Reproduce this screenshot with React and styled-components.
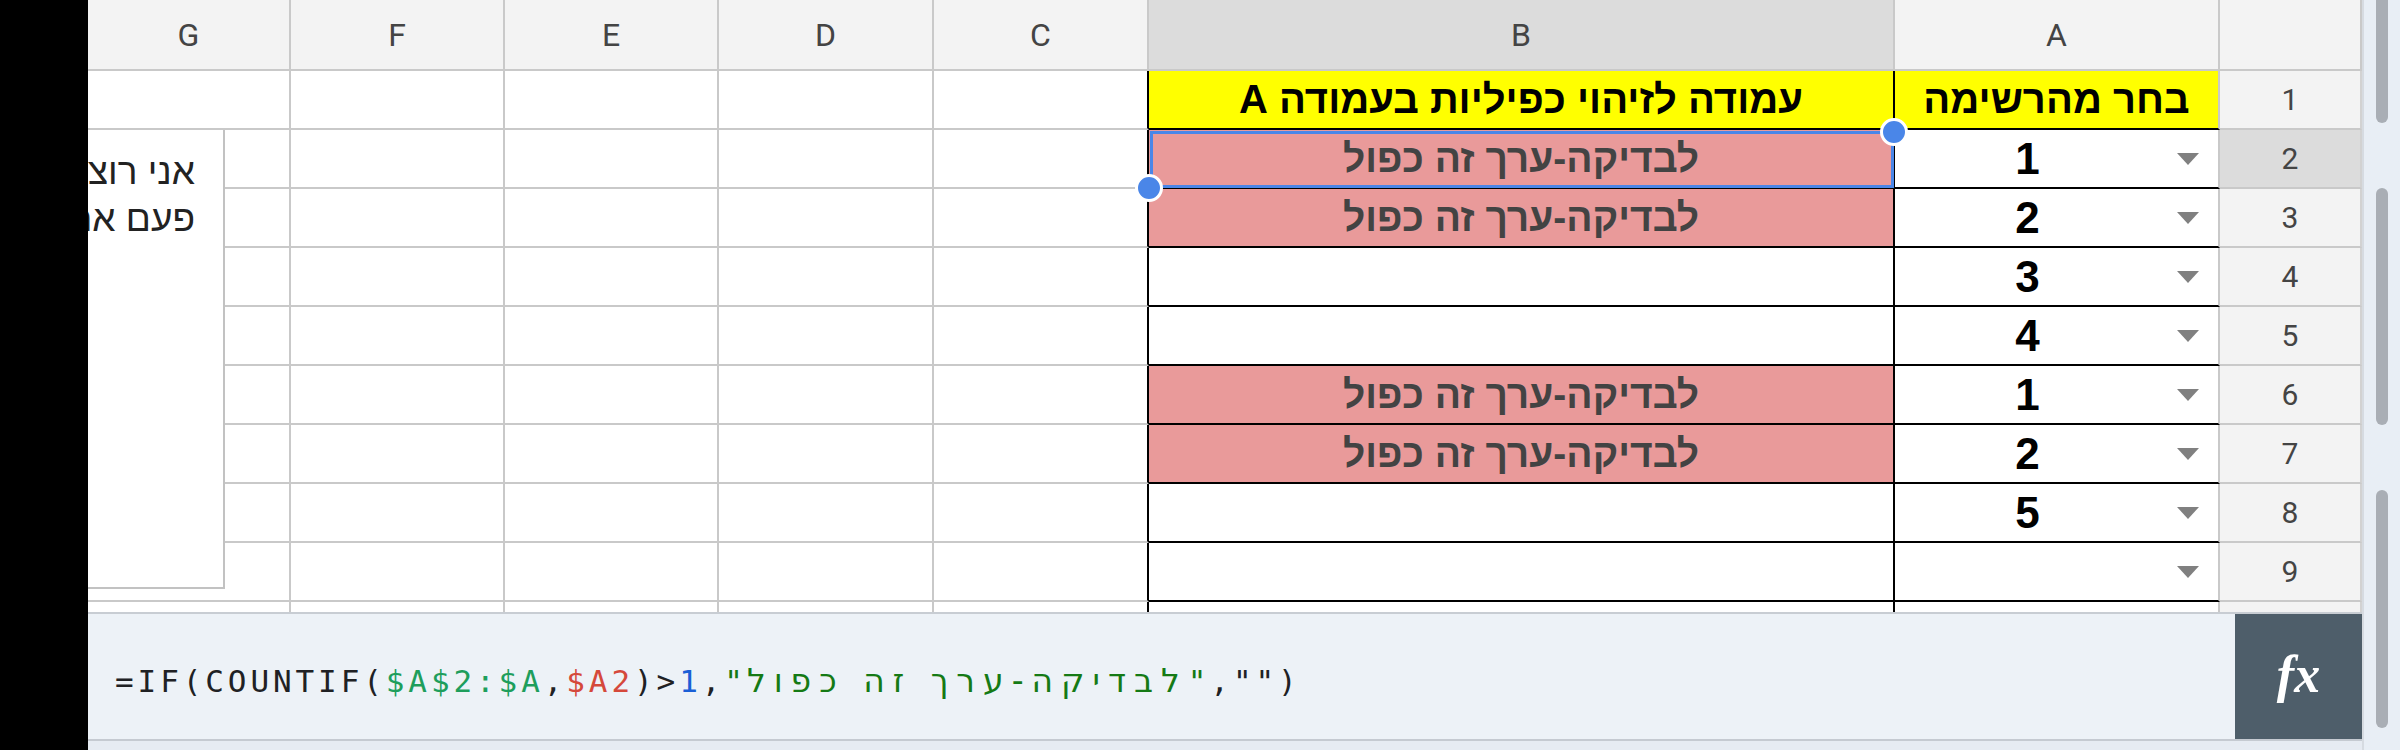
import React from 'react';
import styled, { createGlobalStyle } from 'styled-components';

const Global = createGlobalStyle`
  html, body { margin: 0; padding: 0; background: #000; }
  body { width: 2400px; height: 750px; overflow: hidden; }
  #root { width: 2400px; height: 750px; }
`;

const Screen = styled.div`
  display: flex;
  width: 2400px;
  height: 750px;
  background: #000;
`;

const Bezel = styled.div`
  width: 88px;
  flex: none;
  background: #000;
`;

const Main = styled.div`
  width: 2274px;
  flex: none;
  display: flex;
  flex-direction: column;
  background: #fff;
`;

const ScrollTrack = styled.div`
  width: 38px;
  flex: none;
  box-sizing: border-box;
  background: #e8eef5;
  border-left: 2px solid #d6dbe1;
  display: flex;
  flex-direction: column;
  align-items: center;
  gap: 65px;
`;

const Thumb = styled.div`
  width: 12px;
  height: ${p => p.$h}px;
  flex: none;
  background: #a9aeb5;
  border-radius: ${p => (p.$flatTop ? '0 0 6px 6px' : '6px')};
`;

const Grid = styled.div`
  position: relative;
  height: 612px;
  flex: none;
  overflow: hidden;
  display: grid;
  grid-template-columns: 203px 214px 214px 215px 215px 746px 325px 142px;
  grid-template-rows: 71px;
  grid-auto-rows: 59px;
`;

const ColHead = styled.div`
  box-sizing: border-box;
  background: ${p => (p.$sel ? '#dcdcdc' : '#f3f3f3')};
  border-right: 2px solid #c9c9c9;
  border-bottom: 2px solid #c9c9c9;
  display: flex;
  align-items: center;
  justify-content: center;
  font-family: Roboto, "Liberation Sans", sans-serif;
  font-size: 32px;
  color: #444;
`;

const RowHead = styled.div`
  box-sizing: border-box;
  background: ${p => (p.$sel ? '#dcdcdc' : '#f3f3f3')};
  border-right: 2px solid #d2d2d2;
  border-bottom: 2px solid #c9c9c9;
  display: flex;
  align-items: center;
  justify-content: center;
  font-family: Roboto, "Liberation Sans", sans-serif;
  font-size: 30px;
  color: #444;
`;

const Cell = styled.div`
  position: relative;
  box-sizing: border-box;
  min-width: 0;
  background: ${p => p.$bg || '#fff'};
  border-right: 2px solid ${p => p.$rc || '#c9c9c9'};
  border-bottom: 2px solid ${p => p.$bc || '#c9c9c9'};
  display: flex;
  align-items: center;
  justify-content: center;
  white-space: nowrap;
  direction: ${p => p.$dir || 'rtl'};
  font-family: "Liberation Sans", Arial, "DejaVu Sans", sans-serif;
  font-weight: 700;
  font-size: ${p => p.$fs || 40}px;
  color: ${p => p.$color || '#000'};
`;

const Selection = styled.div`
  position: absolute;
  top: 1px;
  left: 1px;
  right: -1px;
  bottom: -1px;
  border: 3px solid #4a86e8;
  pointer-events: none;
  z-index: 2;
`;

const Handle = styled.div`
  position: absolute;
  width: 22px;
  height: 22px;
  border-radius: 50%;
  background: #4a86e8;
  border: 3px solid #fff;
  z-index: 3;
  ${p => (p.$corner === 'tr' ? 'top: -12px; right: -15px;' : 'bottom: -15px; left: -14px;')}
`;

const ValueArea = styled.div`
  flex: 1;
  display: flex;
  align-items: center;
  justify-content: center;
  font-size: 44px;
`;

const ArrowSlot = styled.div`
  flex: none;
  padding: 0 19px 0 17px;
  display: flex;
  align-items: center;
`;

const Arrow = styled.div`
  width: 0;
  height: 0;
  border-left: 11px solid transparent;
  border-right: 11px solid transparent;
  border-top: 12px solid #808080;
`;

const Note = styled.div`
  position: absolute;
  top: 130px;
  left: -163px;
  width: 300px;
  height: 459px;
  box-sizing: border-box;
  background: #fff;
  border-right: 2px solid #c2c2c2;
  border-bottom: 2px solid #c2c2c2;
  padding: 18px 28px 0 0;
  direction: rtl;
  text-align: right;
  font-family: "Liberation Sans", Arial, "DejaVu Sans", sans-serif;
  font-size: 37px;
  line-height: 47px;
  color: #222;
  white-space: nowrap;
  z-index: 1;
`;

const FormulaBar = styled.div`
  display: flex;
  height: 127px;
  flex: none;
  box-sizing: border-box;
  border-top: 2px solid #c8cdd3;
  background: #edf2f7;
`;

const FormulaText = styled.div`
  flex: 1;
  display: flex;
  align-items: center;
  padding: 8px 0 0 27px;
  direction: ltr;
  white-space: pre;
  font-family: "DejaVu Sans Mono", "Liberation Mono", monospace;
  font-size: 31px;
  letter-spacing: 3.9px;
  color: #202124;
`;

const Tok = styled.span`
  color: ${p => p.$c};
`;

const HebrewTok = styled.span`
  color: #157a15;
  font-family: "DejaVu Sans", "Liberation Sans", sans-serif;
  font-size: 33px;
  letter-spacing: 8px;
`;

const FxBox = styled.div`
  width: 127px;
  flex: none;
  background: #4e5e6a;
  display: flex;
  align-items: center;
  justify-content: center;
  color: #fff;
  font-family: "Liberation Serif", "DejaVu Serif", serif;
  font-style: italic;
  font-weight: 700;
  font-size: 52px;
  padding-bottom: 4px;
  box-sizing: border-box;
`;

const BottomStrip = styled.div`
  flex: 1;
  box-sizing: border-box;
  border-top: 2px solid #c5cad1;
  background: #e6ebf2;
`;

const DUP = 'לבדיקה-ערך זה כפול';
const PINK = '#e99a9a';

const rows = [
  { n: 1, b: 'עמודה לזיהוי כפיליות בעמודה A', a: 'בחר מהרשימה', head: true },
  { n: 2, b: DUP, a: '1', sel: true },
  { n: 3, b: DUP, a: '2' },
  { n: 4, b: '', a: '3' },
  { n: 5, b: '', a: '4' },
  { n: 6, b: DUP, a: '1' },
  { n: 7, b: DUP, a: '2' },
  { n: 8, b: '', a: '5' },
  { n: 9, b: '', a: '' },
  { n: '', b: '', a: '', tail: true },
];

const cols = ['G', 'F', 'E', 'D', 'C', 'B', 'A'];

export default function App() {
  return (
    <>
      <Global />
      <Screen>
        <Bezel />
        <Main>
          <Grid>
            {cols.map(c => (
              <ColHead key={c} $sel={c === 'B'}>{c}</ColHead>
            ))}
            <ColHead />
            {rows.map((r, i) => {
              const black = !r.tail;
              return (
                <React.Fragment key={i}>
                  <Cell />
                  <Cell />
                  <Cell />
                  <Cell />
                  <Cell $rc="#000" />
                  <Cell
                    $rc="#000"
                    $bc={black ? '#000' : undefined}
                    $bg={r.head ? '#ffff00' : r.b ? PINK : '#fff'}
                    $color={r.head ? '#000' : '#434343'}
                    $fs={r.head ? 40 : 39}
                  >
                    {r.b}
                    {r.sel && (
                      <>
                        <Selection />
                        <Handle $corner="tr" />
                        <Handle $corner="bl" />
                      </>
                    )}
                  </Cell>
                  <Cell
                    $dir={r.head ? 'rtl' : 'ltr'}
                    $bc={black ? '#000' : undefined}
                    $bg={r.head ? '#ffff00' : '#fff'}
                  >
                    {r.head ? (
                      r.a
                    ) : r.tail ? null : (
                      <>
                        <ValueArea>{r.a}</ValueArea>
                        <ArrowSlot><Arrow /></ArrowSlot>
                      </>
                    )}
                  </Cell>
                  <RowHead $sel={r.sel}>{r.n}</RowHead>
                </React.Fragment>
              );
            })}
            <Note>
              <div>אני רוצה לזהות</div>
              <div>פעם אחת בלבד</div>
            </Note>
          </Grid>
          <FormulaBar>
            <FormulaText>
              <span dir="ltr">
                <Tok $c="#202124">=IF(COUNTIF(</Tok>
                <Tok $c="#1e9e5c">$A$2:$A</Tok>
                <Tok $c="#202124">,</Tok>
                <Tok $c="#d5493b">$A2</Tok>
                <Tok $c="#202124">)&gt;</Tok>
                <Tok $c="#1a5fd6">1</Tok>
                <Tok $c="#202124">,</Tok>
                <Tok $c="#157a15">"</Tok>
                <HebrewTok>לבדיקה-ערך זה כפול</HebrewTok>
                <Tok $c="#157a15">"</Tok>
                <Tok $c="#202124">,"")</Tok>
              </span>
            </FormulaText>
            <FxBox>fx</FxBox>
          </FormulaBar>
          <BottomStrip />
        </Main>
        <ScrollTrack>
          <Thumb $h={123} $flatTop />
          <Thumb $h={237} />
          <Thumb $h={238} />
        </ScrollTrack>
      </Screen>
    </>
  );
}
